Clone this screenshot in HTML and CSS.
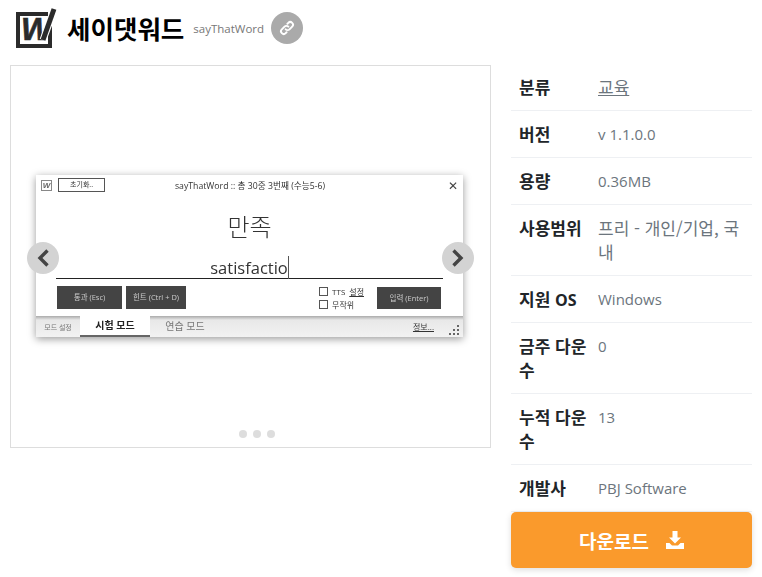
FILE: index.html
```html
<!DOCTYPE html>
<html lang="ko">
<head>
    <meta charset="UTF-8">
    <title>세이댓워드</title>
    <link rel="stylesheet" href="styles.css">
</head>
<body>
    <header class="head">
        <svg class="logo" width="42" height="40" viewBox="0 0 42 40">
            <path d="M1 4H33V8H5V36H33V18H37V40H1Z" fill="#2b2b2b"/>
            <text x="6" y="32" class="logo-w">W</text>
            <path d="M28 32 39 2" stroke="#fff" stroke-width="7"/>
            <path d="M28 32 39 1" stroke="#2b2b2b" stroke-width="5"/>
        </svg>
        <h1>세이댓워드</h1>
        <span class="eng">sayThatWord</span>
        <a class="link-btn" href="#">
            <svg width="16" height="16" viewBox="0 0 18 18" fill="none" stroke="#fff" stroke-width="2.200" stroke-linecap="round">
                <path d="M7.500 10.500a3 3 0 0 0 4.300 0l3-3a3 3 0 0 0-4.300-4.300l-1 1"/>
                <path d="M10.500 7.500a3 3 0 0 0-4.300 0l-3 3a3 3 0 0 0 4.300 4.300l1-1"/>
            </svg>
        </a>
    </header>

    <main class="content">
        <section class="gallery">
            <div class="shot">
                <div class="shot-top">
                    <span class="mini-logo">W</span>
                    <span class="reset">초기화..</span>
                    <span class="shot-title">sayThatWord :: 총 30중 3번째 (수능5-6)</span>
                    <span class="shot-close">✕</span>
                </div>
                <div class="word">만족</div>
                <div class="answer"><span class="typed">satisfactio</span></div>
                <div class="shot-actions">
                    <span class="dark-btn pass">통과 (Esc)</span>
                    <span class="dark-btn hint">힌트 (Ctrl + D)</span>
                    <div class="checks">
                        <span class="check"><i></i>TTS <u>설정</u></span>
                        <span class="check"><i></i>무작위</span>
                    </div>
                    <span class="dark-btn enter">입력 (Enter)</span>
                </div>
                <div class="shot-tabs">
                    <span class="tab-label">모드 설정</span>
                    <span class="tab active">시험 모드</span>
                    <span class="tab">연습 모드</span>
                    <u class="info">정보...</u>
                    <svg class="grip" width="12" height="10" viewBox="0 0 12 10" fill="#666">
                        <rect x="9" y="0" width="2" height="2"/><rect x="5" y="4" width="2" height="2"/><rect x="9" y="4" width="2" height="2"/>
                        <rect x="1" y="8" width="2" height="2"/><rect x="5" y="8" width="2" height="2"/><rect x="9" y="8" width="2" height="2"/>
                    </svg>
                </div>
            </div>
            <button class="arrow prev">
                <svg width="14" height="20" viewBox="0 0 14 20" fill="none" stroke="#444" stroke-width="3.400"><path d="M11.500 2.500 4 10l7.500 7.500"/></svg>
            </button>
            <button class="arrow next">
                <svg width="14" height="20" viewBox="0 0 14 20" fill="none" stroke="#444" stroke-width="3.400"><path d="M2.500 2.500 10 10l-7.500 7.500"/></svg>
            </button>
            <div class="dots"><i></i><i></i><i></i></div>
        </section>

        <aside class="side">
            <table class="specs">
                <tr><th>분류</th><td><a href="#">교육</a></td></tr>
                <tr><th>버전</th><td class="latin">v 1.1.0.0</td></tr>
                <tr><th>용량</th><td class="latin">0.36MB</td></tr>
                <tr><th>사용범위</th><td>프리 - 개인/기업, 국내</td></tr>
                <tr><th>지원 <span class="latin">OS</span></th><td class="latin">Windows</td></tr>
                <tr><th>금주 다운수</th><td class="latin">0</td></tr>
                <tr><th>누적 다운수</th><td class="latin">13</td></tr>
                <tr><th>개발사</th><td class="latin">PBJ Software</td></tr>
            </table>
            <a class="download" href="#">
                다운로드
                <svg width="18" height="18" viewBox="0 0 18 18" fill="#fff"><path d="M6.500 0h5v6.500h3.500L9 12.500 3 6.500h3.500z"/><path d="M0 12h3.500L6 14.500h6L14.500 12H18v6H0z"/></svg>
            </a>
        </aside>
    </main>
</body>
</html>
```

FILE: styles.css
```css
html, body { margin: 0; padding: 0; height: 577px; overflow: hidden; }
body { font-family: "Open Sans", "Noto Sans CJK KR", sans-serif; background: #fff; color: #000; }
.head { display: flex; align-items: center; height: 56px; padding-left: 15px; box-sizing: border-box; }
.logo { margin-right: 10px; }
.logo-w { font: italic bold 32px "Liberation Sans", sans-serif; fill: #2b2b2b; stroke: #2b2b2b; stroke-width: .6px; }
.head h1 { margin: 0 9px 0 0; font-size: 25.500px; font-weight: 700; font-family: "Noto Sans CJK KR", sans-serif; line-height: 32px; }
.eng { font-size: 11.500px; color: #777; margin-right: 7px; }
.link-btn { display: flex; align-items: center; justify-content: center; width: 32px; height: 32px; border-radius: 50%; background: #aaa; }

.content { display: flex; align-items: flex-start; padding: 9px 10px 0; }
.gallery { position: relative; box-sizing: border-box; width: 481px; height: 383px; border: 1px solid #ddd; display: flex; align-items: center; justify-content: center; padding: 0 2px 1px 0; }

.shot { width: 427px; height: 162px; background: #fff; box-shadow: 0 2px 8px #0006; display: flex; flex-direction: column; filter: blur(0.4px); color: #333; }
.shot-top { display: flex; align-items: center; height: 20px; padding: 0 5px; font-size: 8px; }
.mini-logo { width: 9px; height: 9px; border: 1px solid #888; font: italic bold 8px/9px "Liberation Sans", sans-serif; text-align: center; margin-right: 6px; color: #666; }
.reset { width: 47px; height: 14px; border: 1px solid #555; box-sizing: border-box; line-height: 12px; text-align: center; font-size: 7px; }
.shot-title { flex: 1; text-align: center; margin-right: 53px; font-size: 8.700px; }
.shot-close { font-size: 12px; color: #444; }
.word { text-align: center; font-size: 24px; line-height: 30px; margin-top: 16px; font-family: "Noto Sans CJK KR", sans-serif; font-weight: 300; }
.answer { margin: 13px 20px 0; height: 24px; border-bottom: 1px solid #222; text-align: center; font-size: 16.500px; line-height: 28px; }
.typed { border-right: 1px solid #555; }
.shot-actions { display: flex; align-items: center; gap: 4px; padding: 7px 22px 0 21px; height: 23px; }
.dark-btn { background: #444; color: #ccc; font-size: 7.500px; height: 23px; line-height: 23px; text-align: center; }
.pass { width: 65px; }
.hint { width: 60px; }
.enter { width: 64px; height: 22px; line-height: 22px; }
.checks { display: flex; flex-direction: column; margin-left: auto; margin-right: 9px; gap: 2px; }
.check { display: flex; align-items: center; gap: 4px; font-size: 8px; line-height: 11px; }
.check i { width: 7px; height: 7px; border: 1px solid #555; }
.shot-tabs { display: flex; align-items: center; margin-top: 7px; height: 21px; background: linear-gradient(#aaa, #e8e8e8 4px, #f2f2f2); font-size: 10px; }
.tab-label { font-size: 7px; color: #777; width: 44px; text-align: center; }
.tab { width: 70px; text-align: center; color: #777; line-height: 19px; }
.tab.active { background: #fff; color: #222; font-weight: 700; border-bottom: 2px solid #666; box-sizing: border-box; height: 21px; }
.info { margin-left: auto; font-size: 8px; margin-right: 14px; }
.grip { margin: 6px 3px 0 0; }

.arrow { position: absolute; top: 176px; width: 32px; height: 32px; border: 0; border-radius: 50%; padding: 0; background: #d3d3d3; display: flex; align-items: center; justify-content: center; }
.prev { left: 16px; }
.next { right: 16px; }
.dots { position: absolute; bottom: 9px; left: 13px; right: 0; display: flex; justify-content: center; gap: 6px; }
.dots i { width: 8px; height: 8px; border-radius: 50%; background: #ddd; }

.side { width: 241px; margin: -1px 0 0 20px; }
.specs { width: 100%; border-collapse: collapse; table-layout: fixed; font-family: "Noto Sans CJK KR", sans-serif; font-size: 17px; line-height: 24px; }
.specs th, .specs td { padding: 11px 8px; border-bottom: 1px solid #eef0f3; vertical-align: top; text-align: left; word-break: break-all; }
.specs th { width: 69px; padding-right: 2px; font-weight: 700; color: #212529; }
.specs td { color: #6c757d; }
.specs td a { color: #6c757d; }
.specs .latin { font-family: "Open Sans", sans-serif; font-size: 15px; }
.specs th .latin { font-size: 16px; line-height: 1; }
.download { display: flex; align-items: center; justify-content: center; gap: 17px; height: 56px; background: #fa9a2c; border-radius: 5px; box-shadow: 0 2px 6px #0002; color: #fff; font-family: "Noto Sans CJK KR", sans-serif; font-size: 19px; font-weight: 700; text-decoration: none; }
```
